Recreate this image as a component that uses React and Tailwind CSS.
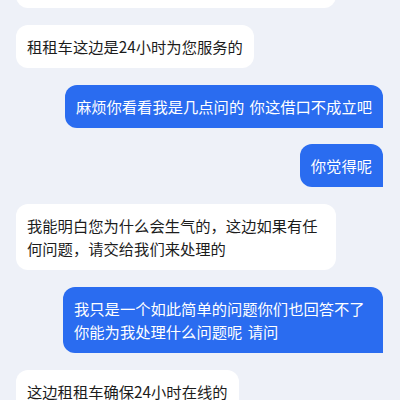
export default function App() {
  const left = "self-start max-w-[320px] bg-white text-[#1c1c1c] rounded-[12px] px-[11px] py-[10px]";
  const right = "self-end max-w-[320px] bg-[#2a6cf0] text-white rounded-[12px] rounded-br-none px-[11px] py-[10px]";
  return (
    <div
      className="w-[400px] h-[400px] overflow-hidden bg-[#eef1f8] pl-4 pr-[17px] flex flex-col gap-[16.8px] text-[15.3px] leading-[23px] [word-spacing:2px]"
      style={{ fontFamily: '"Noto Sans CJK SC", "Noto Sans", sans-serif' }}
    >
      <div className={left + " w-[320px] -mt-[58px] shrink-0"}>
        您好，很抱歉给您带来不好的体验，我们会尽快为您核实处理
      </div>
      <div className={left}>租租车这边是24小时为您服务的</div>
      <div className={right}>麻烦你看看我是几点问的 你这借口不成立吧</div>
      <div className={right}>你觉得呢</div>
      <div className={left}>我能明白您为什么会生气的，这边如果有任何问题，请交给我们来处理的</div>
      <div className={right}>我只是一个如此简单的问题你们也回答不了你能为我处理什么问题呢 请问</div>
      <div className={left + " shrink-0"}>这边租租车确保24小时在线的</div>
    </div>
  );
}
